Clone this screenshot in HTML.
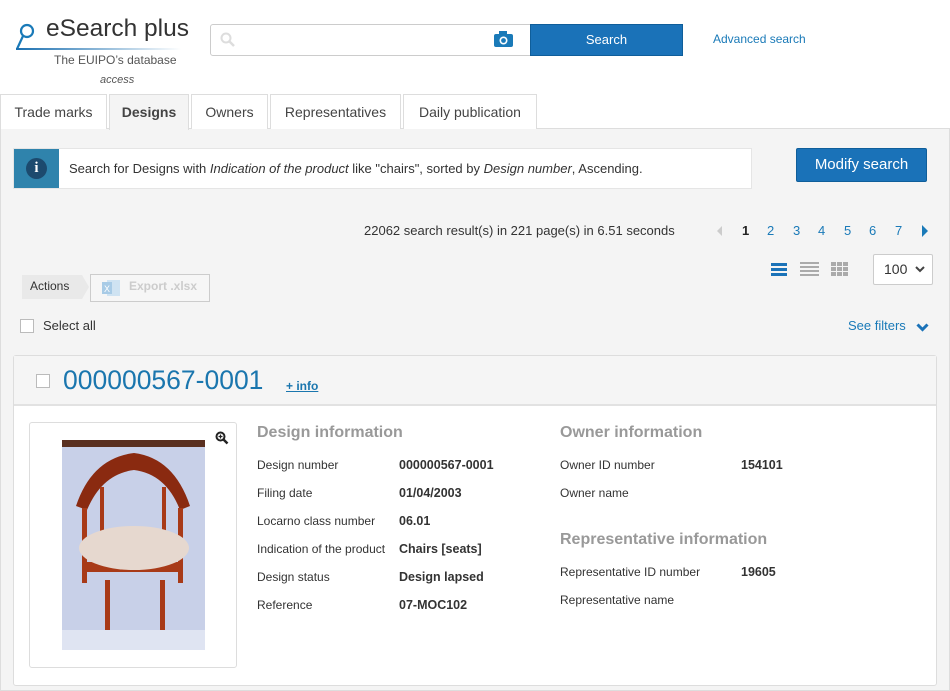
<!DOCTYPE html>
<html><head><style>
*{margin:0;padding:0;box-sizing:border-box}
body{width:950px;height:691px;overflow:hidden;background:#fff;font-family:"Liberation Sans",sans-serif;color:#333;position:relative}
.a{position:absolute;white-space:nowrap}
.tab{position:absolute;top:94px;height:35px;border:1px solid #ddd;border-bottom:none;background:#fff;font-size:14px;color:#444;text-align:center;line-height:34px}
.lbl{font-size:12px;color:#333}
.val{font-size:12.5px;font-weight:bold;color:#333}
.pg{font-size:13px;color:#1a7ab8}
</style></head><body>
<!-- logo -->
<svg class="a" style="left:14px;top:21px" width="180" height="36"><circle cx="13" cy="10" r="6" fill="none" stroke="#1a7ab8" stroke-width="2.2"/><line x1="9" y1="15" x2="3" y2="28" stroke="#1a7ab8" stroke-width="2.2"/><defs><linearGradient id="g"><stop offset="0" stop-color="#1a6fb0"/><stop offset="1" stop-color="#1a6fb0" stop-opacity="0"/></linearGradient></defs><rect x="2" y="27" width="165" height="2" fill="url(#g)"/></svg>
<div class="a" style="left:46px;top:15px;font-size:24.5px;color:#333">eSearch plus</div>
<div class="a" style="left:54px;top:53px;font-size:12px;color:#555">The EUIPO’s database</div>
<div class="a" style="left:100px;top:74px;font-size:11px;font-style:italic;color:#555">access</div>
<!-- search -->
<div class="a" style="left:210px;top:24px;width:322px;height:32px;border:1px solid #ccc;border-radius:3px 0 0 3px;background:#fff"></div>
<svg class="a" style="left:220px;top:32px" width="16" height="16"><circle cx="6" cy="6" r="4.5" fill="none" stroke="#ddd" stroke-width="2"/><line x1="9" y1="9" x2="14" y2="14" stroke="#ddd" stroke-width="2.5"/></svg>
<svg class="a" style="left:493px;top:30px" width="22" height="18"><rect x="1" y="4" width="19" height="13" rx="2" fill="#1a7ab8"/><rect x="6" y="1" width="8" height="4" fill="#1a7ab8"/><circle cx="10.5" cy="10.5" r="4" fill="#fff"/><circle cx="10.5" cy="10.5" r="2.4" fill="#1a7ab8"/></svg>
<div class="a" style="left:530px;top:24px;width:153px;height:32px;background:#1a72b8;border:1px solid #0f5e9a;color:#fff;font-size:13px;text-align:center;line-height:30px">Search</div>
<div class="a" style="left:713px;top:32px;font-size:12px;color:#1a7ab8">Advanced search</div>
<!-- tabs -->
<div class="a" style="left:0;top:128px;width:950px;height:563px;background:#f4f4f4;border:1px solid #ddd"></div>
<div class="tab" style="left:0;width:107px">Trade marks</div>
<div class="tab" style="left:109px;width:80px;background:#f4f4f4;font-weight:bold;height:36px">Designs</div>
<div class="tab" style="left:191px;width:77px">Owners</div>
<div class="tab" style="left:270px;width:131px">Representatives</div>
<div class="tab" style="left:403px;width:134px">Daily publication</div>
<!-- info bar -->
<div class="a" style="left:13px;top:148px;width:739px;height:41px;background:#fff;border:1px solid #e5e5e5"></div>
<div class="a" style="left:14px;top:149px;width:45px;height:39px;background:#2f83ac"></div>
<div class="a" style="left:26px;top:158px;width:21px;height:21px;border-radius:50%;background:#1c4a6e;color:#fff;font-weight:bold;font-family:'Liberation Serif',serif;font-size:15px;text-align:center;line-height:21px">i</div>
<div class="a" style="left:69px;top:161px;font-size:13px;color:#333">Search for Designs with <i>Indication of the product</i> like "chairs", sorted by <i>Design number</i>, Ascending.</div>
<div class="a" style="left:796px;top:148px;width:131px;height:34px;background:#1a72b8;border:1px solid #0f5e9a;border-radius:2px;color:#fff;font-size:15px;text-align:center;line-height:32px">Modify search</div>
<!-- results -->
<div class="a" style="left:364px;top:223px;font-size:13px;color:#333">22062 search result(s) in 221 page(s) in 6.51 seconds</div>
<div class="a" style="left:717px;top:226px;width:0;height:0;border-top:5px solid transparent;border-bottom:5px solid transparent;border-right:5px solid #ccc"></div>
<div class="a pg" style="left:742px;top:223px;color:#222;font-weight:bold">1</div>
<div class="a pg" style="left:767px;top:223px">2</div>
<div class="a pg" style="left:793px;top:223px">3</div>
<div class="a pg" style="left:818px;top:223px">4</div>
<div class="a pg" style="left:844px;top:223px">5</div>
<div class="a pg" style="left:869px;top:223px">6</div>
<div class="a pg" style="left:895px;top:223px">7</div>
<div class="a" style="left:922px;top:225px;width:0;height:0;border-top:6px solid transparent;border-bottom:6px solid transparent;border-left:6px solid #1a7ab8"></div>
<svg class="a" style="left:770px;top:261px" width="80" height="16"><g fill="#1a72b8"><rect x="1" y="2" width="16" height="3"/><rect x="1" y="7" width="16" height="3"/><rect x="1" y="12" width="16" height="3"/></g><g fill="#aaa"><rect x="30" y="1" width="19" height="2"/><rect x="30" y="5" width="19" height="2"/><rect x="30" y="9" width="19" height="2"/><rect x="30" y="13" width="19" height="2"/></g><g fill="#aaa"><rect x="61" y="1" width="5" height="4"/><rect x="67" y="1" width="5" height="4"/><rect x="73" y="1" width="5" height="4"/><rect x="61" y="6" width="5" height="4"/><rect x="67" y="6" width="5" height="4"/><rect x="73" y="6" width="5" height="4"/><rect x="61" y="11" width="5" height="4"/><rect x="67" y="11" width="5" height="4"/><rect x="73" y="11" width="5" height="4"/></g></svg>
<div class="a" style="left:873px;top:254px;width:60px;height:31px;background:#fff;border:1px solid #ccc;border-radius:2px;font-size:14px;line-height:29px;padding-left:10px">100</div>
<svg class="a" style="left:915px;top:266px" width="10" height="7"><path d="M1 1L5 5L9 1" stroke="#444" stroke-width="2" fill="none"/></svg>
<!-- actions -->
<svg class="a" style="left:22px;top:275px" width="70" height="24"><path d="M0 0H60L67 12L60 24H0Z" fill="#e9e9e9"/></svg>
<div class="a" style="left:30px;top:279px;font-size:12px;color:#333">Actions</div>
<div class="a" style="left:90px;top:274px;width:120px;height:28px;border:1px solid #ccc;background:#f6f6f6"></div>
<svg class="a" style="left:101px;top:278px" width="20" height="20"><rect x="6" y="2" width="13" height="16" fill="#cfe3f2"/><rect x="1" y="4" width="10" height="12" fill="#a8cbe6"/><text x="3" y="14" font-size="9" fill="#fff" font-family="Liberation Sans">X</text></svg>
<div class="a" style="left:129px;top:279px;font-size:12px;font-weight:bold;color:#ccc">Export .xlsx</div>
<div class="a" style="left:20px;top:319px;width:14px;height:14px;border:1px solid #bbb;background:#fff"></div>
<div class="a" style="left:43px;top:318px;font-size:13px;color:#333">Select all</div>
<div class="a" style="left:848px;top:318px;font-size:13px;color:#1a7ab8">See filters</div>
<svg class="a" style="left:916px;top:323px" width="13" height="9"><path d="M1.5 1.5L6.5 6.5L11.5 1.5" stroke="#1a72b8" stroke-width="3" fill="none"/></svg>
<!-- card -->
<div class="a" style="left:13px;top:355px;width:924px;height:331px;background:#fff;border:1px solid #ddd;border-radius:3px"></div>
<div class="a" style="left:14px;top:356px;width:922px;height:50px;background:#f5f5f5;border-bottom:2px solid #e2e2e2"></div>
<div class="a" style="left:36px;top:374px;width:14px;height:14px;border:1px solid #bbb;background:#fff"></div>
<div class="a" style="left:63px;top:365px;font-size:26.5px;color:#1a76ae">000000567-0001</div>
<div class="a" style="left:286px;top:379px;font-size:12px;font-weight:bold;color:#1a76ae;text-decoration:underline">+ info</div>
<!-- image -->
<div class="a" style="left:29px;top:422px;width:208px;height:246px;border:1px solid #ddd;border-radius:3px;background:#fff"></div>
<svg class="a" style="left:215px;top:431px" width="14" height="14"><circle cx="5.5" cy="5.5" r="4" fill="none" stroke="#222" stroke-width="2"/><line x1="8.5" y1="8.5" x2="12.5" y2="12.5" stroke="#222" stroke-width="2.5"/><path d="M3.5 5.5H7.5M5.5 3.5V7.5" stroke="#222" stroke-width="1.2"/></svg>
<svg class="a" style="left:62px;top:440px" width="143" height="210">
<rect width="143" height="210" fill="#c8d0e8"/><rect y="190" width="143" height="20" fill="#dfe4f2"/><rect width="143" height="7" fill="#5a3020"/>
<path d="M14 66Q30 18 72 13Q112 18 128 66L118 70Q104 34 72 30Q40 34 25 70Z" fill="#8a2a10"/>
<g fill="#a83a18"><rect x="38" y="47" width="4" height="45"/><rect x="100" y="47" width="4" height="45"/><rect x="20" y="68" width="5" height="75"/><rect x="116" y="68" width="5" height="75"/><rect x="43" y="140" width="5" height="50"/><rect x="98" y="140" width="5" height="50"/><rect x="22" y="122" width="97" height="10"/></g>
<ellipse cx="72" cy="108" rx="55" ry="22" fill="#e6d8cf"/>
</svg>
<!-- details -->
<div class="a" style="left:257px;top:424px;font-size:16px;font-weight:bold;color:#999">Design information</div>
<div class="a lbl" style="left:257px;top:458px">Design number</div><div class="a val" style="left:399px;top:458px">000000567-0001</div>
<div class="a lbl" style="left:257px;top:486px">Filing date</div><div class="a val" style="left:399px;top:486px">01/04/2003</div>
<div class="a lbl" style="left:257px;top:514px">Locarno class number</div><div class="a val" style="left:399px;top:514px">06.01</div>
<div class="a lbl" style="left:257px;top:542px">Indication of the product</div><div class="a val" style="left:399px;top:542px">Chairs [seats]</div>
<div class="a lbl" style="left:257px;top:570px">Design status</div><div class="a val" style="left:399px;top:570px">Design lapsed</div>
<div class="a lbl" style="left:257px;top:598px">Reference</div><div class="a val" style="left:399px;top:598px">07-MOC102</div>
<div class="a" style="left:560px;top:424px;font-size:16px;font-weight:bold;color:#999">Owner information</div>
<div class="a lbl" style="left:560px;top:458px">Owner ID number</div><div class="a val" style="left:741px;top:458px">154101</div>
<div class="a lbl" style="left:560px;top:486px">Owner name</div>
<div class="a" style="left:560px;top:531px;font-size:16px;font-weight:bold;color:#999">Representative information</div>
<div class="a lbl" style="left:560px;top:565px">Representative ID number</div><div class="a val" style="left:741px;top:565px">19605</div>
<div class="a lbl" style="left:560px;top:593px">Representative name</div>
</body></html>
